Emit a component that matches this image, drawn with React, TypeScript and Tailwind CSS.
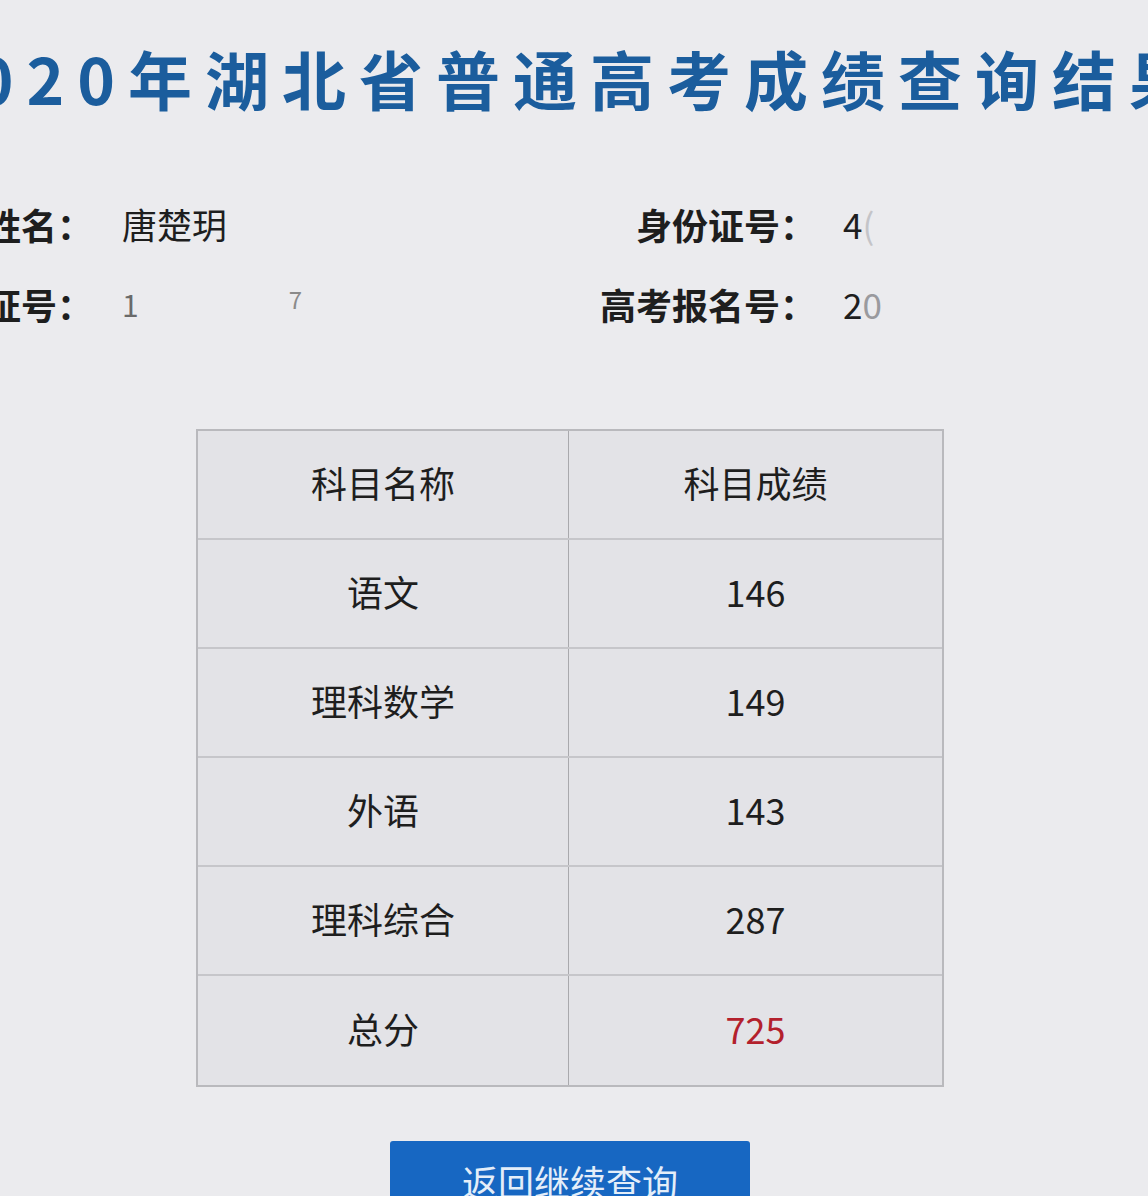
import React from "react";

const rows: { name: string; score: string; red?: boolean }[] = [
  { name: "语文", score: "146" },
  { name: "理科数学", score: "149" },
  { name: "外语", score: "143" },
  { name: "理科综合", score: "287" },
  { name: "总分", score: "725", red: true },
];

export default function App() {
  return (
    <div className="w-[1148px] h-[1202px] overflow-hidden bg-white font-['Noto_Sans_CJK_SC',sans-serif]">
      <div className="h-[1196px] overflow-hidden bg-[#ebebee] flex flex-col">
        {/* Title */}
        <div className="pt-[45px] whitespace-nowrap">
          <div className="-ml-[75px] text-[64px] leading-[64px] font-bold tracking-[13px] text-[#1b5d9d]">
            2020年湖北省普通高考成绩查询结果
          </div>
        </div>

        {/* Info */}
        <div className="mt-[95px] flex flex-col gap-[40px] text-[35px] leading-[40px] text-[#1e1e1e]">
          <div className="flex whitespace-nowrap">
            <div className="-ml-[107px] w-[200px] text-right font-bold text-[36px] shrink-0">姓名：</div>
            <div className="ml-[29px] w-[450px] shrink-0">唐楚玥</div>
            <div className="w-[244px] text-right font-bold text-[36px] shrink-0">身份证号：</div>
            <div className="ml-[27px] shrink-0">
              4<span className="text-[#c4c4c8]">(</span>
            </div>
          </div>
          <div className="flex whitespace-nowrap">
            <div className="-ml-[107px] w-[200px] text-right font-bold text-[36px] shrink-0">准考证号：</div>
            <div className="ml-[29px] w-[450px] shrink-0 flex">
              <span className="text-[#6a6a6a] text-[30px]">1</span>
              <span className="ml-[150px] text-[#8a8a8a] text-[24px] leading-[30px]">7</span>
            </div>
            <div className="w-[244px] text-right font-bold text-[36px] shrink-0">高考报名号：</div>
            <div className="ml-[27px] shrink-0">
              2<span className="text-[#9a9a9e]">0</span>
            </div>
          </div>
        </div>

        {/* Table */}
        <div className="mt-[105px] ml-[196px] w-[748px] shrink-0 border-2 border-[#b9b9bd] bg-[#e3e3e7] text-[36px] text-[#1e1e1e]">
          <div className="grid grid-cols-[371px_1fr] h-[109px] border-b-2 border-[#c6c6ca]">
            <div className="flex items-center justify-center pb-[6px] border-r border-[#a9a9ad]">科目名称</div>
            <div className="flex items-center justify-center pb-[6px]">科目成绩</div>
          </div>
          {rows.map((r, i) => (
            <div
              key={r.name}
              className={
                i < rows.length - 1
                  ? "grid grid-cols-[371px_1fr] h-[109px] border-b-2 border-[#c6c6ca]"
                  : "grid grid-cols-[371px_1fr] h-[109px]"
              }
            >
              <div className="flex items-center justify-center pb-[6px] border-r border-[#a9a9ad]">{r.name}</div>
              <div
                className={
                  r.red
                    ? "flex items-center justify-center pb-[6px] text-[#b3202c]"
                    : "flex items-center justify-center pb-[6px]"
                }
              >
                {r.score}
              </div>
            </div>
          ))}
        </div>

        {/* Button */}
        <div className="mt-[54px] ml-[390px] w-[360px] h-[90px] shrink-0 rounded-t-[3px] bg-[#1767c2] flex justify-center pt-[20px]">
          <span className="text-[36px] leading-[40px] text-[#e4eef9]">返回继续查询</span>
        </div>
      </div>
    </div>
  );
}
